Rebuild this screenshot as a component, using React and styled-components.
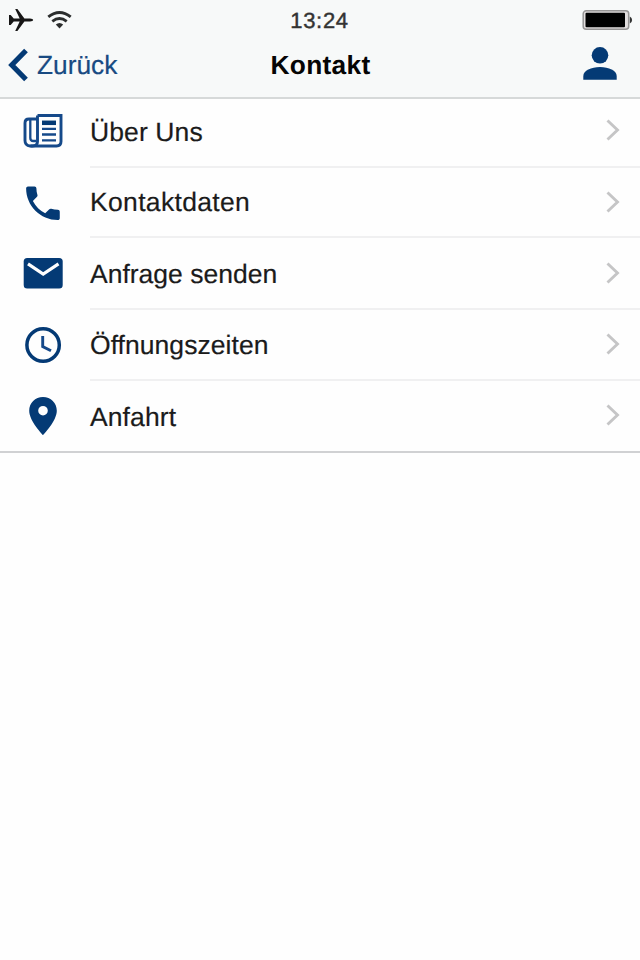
import React from "react";
import styled, { createGlobalStyle } from "styled-components";

const NAVY = "#043a75";

const GlobalStyle = createGlobalStyle`
  * { box-sizing: border-box; }
  html, body { margin: 0; background: #fefefe; }
  body { font-family: "Liberation Sans", Arial, sans-serif; text-rendering: geometricPrecision; }
  svg { display: block; flex: none; }
`;

const Screen = styled.div`
  width: 640px;
  height: 960px;
  overflow: hidden;
  background: #fefefe;
`;

const Header = styled.header`
  height: 99px;
  background: #f7f9f9;
  border-bottom: 2px solid #d6d9d9;
`;

const StatusBar = styled.div`
  height: 40px;
  display: grid;
  grid-template-columns: 1fr auto 1fr;
  align-items: center;
  padding: 0 7px 0 8px;
`;

const Signals = styled.div`
  display: flex;
  align-items: center;
  gap: 13px;
`;

const Clock = styled.time`
  font-size: 22px;
  line-height: 26px;
  letter-spacing: 0.7px;
  color: #333;
  -webkit-text-stroke: 0.45px #333;
  padding: 2px 2px 0 0;
`;

const Battery = styled.div`
  justify-self: end;
`;

const NavBar = styled.nav`
  height: 57px;
  display: grid;
  grid-template-columns: 1fr auto 1fr;
  align-items: start;
  padding: 0 23px 0 23px;
`;

const Back = styled.a`
  display: flex;
  align-items: center;
  gap: 8px;
  height: 50px;
  margin-left: -15px;
  color: #184a82;
  font-size: 26.300px;
  -webkit-text-stroke: 0.2px #184a82;
`;

const Title = styled.h1`
  margin: 0 0 0 1px;
  font-size: 26.300px;
  line-height: 50px;
  letter-spacing: 0.3px;
  color: #050505;
`;

const Profile = styled.div`
  justify-self: end;
  padding-top: 6px;
`;

const List = styled.ul`
  list-style: none;
  margin: 0;
  padding: 0;
  background: #fefefe;
  border-bottom: 2px solid #d0d1d3;
`;

const Row = styled.li`
  display: flex;
  height: ${(p) => p.$height}px;
`;

const IconCell = styled.div`
  width: 90px;
  padding: ${(p) => p.$top}px 0 0 22px;
`;

const Content = styled.div`
  flex: 1;
  display: flex;
  justify-content: space-between;
  align-items: flex-start;
  padding-right: 20px;
  border-bottom: ${(p) => (p.$last ? "0" : "2px solid #f0f0f1")};
`;

const Label = styled.span`
  font-size: 26.500px;
  line-height: 30px;
  color: #1b1b1b;
  -webkit-text-stroke: 0.2px #1b1b1b;
  padding-top: ${(p) => p.$top}px;
  letter-spacing: ${(p) => p.$spacing}px;
`;

const ChevronBox = styled.div`
  padding-top: ${(p) => p.$top}px;
`;

const Plane = () => (
  <svg width="26" height="24" viewBox="0 0 26 24">
    <path
      fill="#161616"
      d="M1 7h1.700l3 3.500h6L7.200 1h2.200l7 9.500H22q3.200.3 3.200 1.500T22 13.500h-5.600L9.400 23H7.200l4.500-9.500h-6l-3 3.500H1V7z"
    />
  </svg>
);

const Wifi = () => (
  <svg width="26" height="20" viewBox="0 0 26 20" fill="none" stroke="#2b2d2d">
    <path strokeWidth="2.900" d="M1.300 6.900Q12.500-1.900 23.700 6.900" />
    <path strokeWidth="2.800" d="M5.300 11.300Q12.500 5.700 19.700 11.300" />
    <path fill="#2b2d2d" stroke="none" d="M8.800 14.500Q12.500 11.300 16.200 14.500L12.500 18.500z" />
  </svg>
);

const BatteryIcon = () => (
  <svg width="51" height="22" viewBox="0 0 51 22">
    <rect x="1.200" y="1.800" width="45.500" height="18.500" rx="3" fill="#e3dfdf" stroke="#969494" strokeWidth="1.500" />
    <rect x="3.500" y="3.700" width="39.500" height="14.600" rx="1" fill="#000" />
    <path d="M47.800 7.500q2.300 1 2.300 3.500t-2.300 3.500z" fill="#333" />
  </svg>
);

const BackArrow = () => (
  <svg width="21" height="34" viewBox="0 0 21 34">
    <path d="M18 2.500L3.800 17L18 31.500" fill="none" stroke={NAVY} strokeWidth="5.200" />
  </svg>
);

const Person = () => (
  <svg width="34" height="34" viewBox="0 0 34 34" fill={NAVY}>
    <circle cx="17" cy="9.300" r="8.300" />
    <path d="M.3 33.700v-3.600C.3 24.500 8.200 21 17 21s16.700 3.500 16.700 9.100v3.600z" />
  </svg>
);

const NewsIcon = () => (
  <svg width="42" height="36" viewBox="0 0 42 36" fill="none" stroke="#15498a" strokeWidth="2.900">
    <path d="M15.500 2.500H39v26q0 4.500-4.500 4.500H8.500" />
    <path d="M15.500 2.500v26q0 4.500-5 4.500H8q-5-.5-5-5.500V10q0-4 4-4h8.500" />
    <path strokeWidth="2.300" d="M8.300 6.500V25q0 3 3 3H14" />
    <path stroke={NAVY} strokeWidth="4.500" d="M20 9.800h14" />
    <path strokeWidth="2.300" d="M20 15.800h14M20 21.500h14M20 27.300h14" />
  </svg>
);

const PhoneIcon = () => (
  <svg width="42" height="36" viewBox="0 0 42 36">
    <path
      transform="translate(-1.500 -4.200) scale(1.870)"
      fill={NAVY}
      d="M6.620 10.790c1.440 2.830 3.760 5.140 6.590 6.590l2.200-2.200c.27-.27.67-.36 1.020-.24 1.120.37 2.330.57 3.570.57.55 0 1 .45 1 1V20c0 .55-.45 1-1 1-9.390 0-17-7.610-17-17 0-.55.45-1 1-1h3.500c.55 0 1 .45 1 1 0 1.250.2 2.450.57 3.570.11.35.03.74-.25 1.020l-2.200 2.200z"
    />
  </svg>
);

const MailIcon = () => (
  <svg width="42" height="32" viewBox="0 0 42 32">
    <rect x="1.700" y="1" width="39" height="30.500" rx="3.500" fill={NAVY} />
    <path d="M6 6.800L21.200 17L36.500 6.800" fill="none" stroke="#fefefe" strokeWidth="3.200" />
  </svg>
);

const ClockIcon = () => (
  <svg width="42" height="38" viewBox="0 0 42 38" fill="none" stroke="#15498a">
    <circle cx="21.100" cy="19" r="16.200" stroke={NAVY} strokeWidth="3.500" />
    <path strokeWidth="2.900" d="M20.700 10v10.500l8.300 4.300" />
  </svg>
);

const PinIcon = () => (
  <svg width="42" height="40" viewBox="0 0 42 40">
    <path
      fill={NAVY}
      fillRule="evenodd"
      d="M21 1C13.200 1 7.200 7 7.200 14.700C7.200 25 21 39 21 39S34.800 25 34.800 14.700C34.800 7 28.800 1 21 1zM21 9.900a4.800 4.800 0 1 1 0 9.600a4.800 4.800 0 0 1 0-9.600z"
    />
  </svg>
);

const Chevron = () => (
  <svg width="14" height="22" viewBox="0 0 14 22">
    <path d="M1.500 1.500L11.500 11L1.500 20.500" fill="none" stroke="#c5c5c6" strokeWidth="2.900" />
  </svg>
);

const items = [
  { label: "Über Uns", Icon: NewsIcon, height: 69, icon: 14, text: 18, arrow: 20, spacing: 0.1 },
  { label: "Kontaktdaten", Icon: PhoneIcon, height: 70, icon: 17, text: 19, arrow: 23, spacing: 0.33 },
  { label: "Anfrage senden", Icon: MailIcon, height: 72, icon: 19, text: 21, arrow: 24, spacing: 0 },
  { label: "Öffnungszeiten", Icon: ClockIcon, height: 71, icon: 16, text: 20, arrow: 23, spacing: 0.05 },
  { label: "Anfahrt", Icon: PinIcon, height: 70, icon: 15, text: 21, arrow: 23, spacing: 0.1 },
];

export default function App() {
  return (
    <Screen>
      <GlobalStyle />
      <Header>
        <StatusBar>
          <Signals>
            <Plane />
            <Wifi />
          </Signals>
          <Clock>13:24</Clock>
          <Battery>
            <BatteryIcon />
          </Battery>
        </StatusBar>
        <NavBar>
          <Back>
            <BackArrow />
            Zurück
          </Back>
          <Title>Kontakt</Title>
          <Profile>
            <Person />
          </Profile>
        </NavBar>
      </Header>
      <List>
        {items.map(({ label, Icon, height, icon, text, arrow, spacing }, i) => (
          <Row key={label} $height={height}>
            <IconCell $top={icon}>
              <Icon />
            </IconCell>
            <Content $last={i === items.length - 1}>
              <Label $top={text} $spacing={spacing}>
                {label}
              </Label>
              <ChevronBox $top={arrow}>
                <Chevron />
              </ChevronBox>
            </Content>
          </Row>
        ))}
      </List>
    </Screen>
  );
}
